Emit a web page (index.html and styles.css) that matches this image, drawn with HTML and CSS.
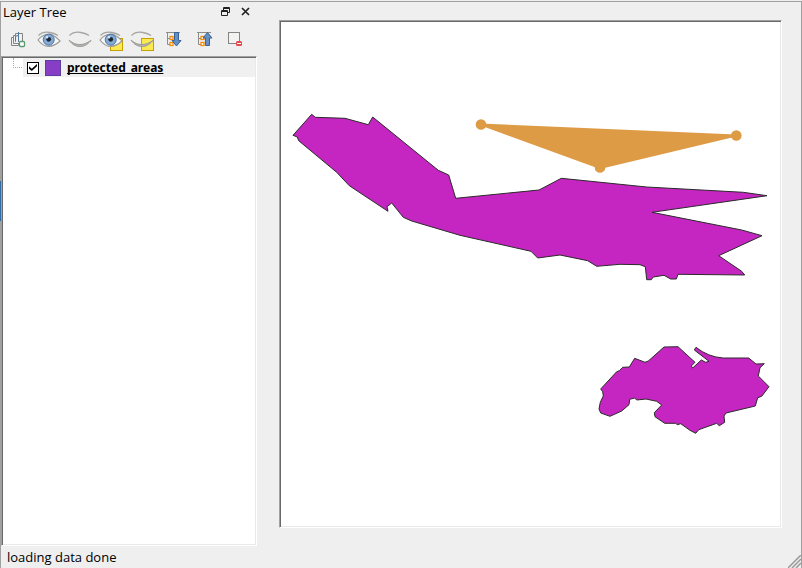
FILE: index.html
```html
<!DOCTYPE html>
<html lang="en">
<head>
<meta charset="utf-8">
<title>Layer Tree</title>
<link rel="stylesheet" href="styles.css">
</head>
<body>
<svg class="defs" aria-hidden="true">
  <defs>
    <g id="eye-open">
      <path d="M1.500 4.500C5 1 9 .8 13 1.500S19 3 21 4.500" fill="none" stroke="#a5a5a2" stroke-width="1.300"/>
      <path d="M1 9C5 4 9 3 13 3.300S20 7 23 10C19 14 16 15.300 11.500 15.300S4 13 1 9Z" fill="#f7f7f5" stroke="#999996" stroke-width="1.200"/>
      <circle cx="11.700" cy="8.700" r="5.500" fill="#83a9d6" stroke="#4d75a3"/>
      <circle cx="11.700" cy="8.300" r="2.400" fill="#1d2633"/>
      <circle cx="10" cy="6.300" r="1.200" fill="#dce9f6"/>
    </g>
    <g id="eye-closed">
      <path d="M1.500 4.500C5 1 9 .8 13 1.500S19 3 21 4.500" fill="none" stroke="#a5a5a2" stroke-width="1.300"/>
      <path d="M1 9C5 12.500 8 13.500 12 13.500S19 12 23 9.500C19 14 16 15.500 12 15.500S4 13.500 1 9Z" fill="#b5b5b2" stroke="#999996"/>
    </g>
    <rect id="selection" x="11.500" y="7.500" width="12" height="12" fill="#fce94f" stroke="#c4a000"/>
    <g id="tree">
      <path d="M5 1.500H19M6.500 1.500V13.500H9M6.500 7.500H9" fill="none" stroke="#8c8c88"/>
      <rect x="9" y="5.500" width="3" height="3" fill="#fff" stroke="#f58b0a" stroke-width="1.300"/>
      <rect x="9" y="11.500" width="3" height="3" fill="#fff" stroke="#f58b0a" stroke-width="1.300"/>
    </g>
  </defs>
</svg>
<div class="window">
  <main class="workspace">
    <section class="dock" aria-labelledby="dock-title">
      <header class="dock-header">
        <h1 class="dock-title" id="dock-title">Layer Tree</h1>
        <button class="dock-button" aria-label="Float">
          <svg width="9" height="9" viewBox="0 0 9 9"><path d="M2.500 3V.5H8.500V5.500H6.500M2.500 1.500H8.500M.5 3.500H6.500V8.500H.5ZM.5 4.500H6.500" fill="none" stroke="#222"/></svg>
        </button>
        <button class="dock-button" aria-label="Close">
          <svg width="9" height="9" viewBox="0 0 9 9"><path d="M1 1L8 8M8 1L1 8" stroke="#222" stroke-width="1.700"/></svg>
        </button>
      </header>
      <div class="toolbar" role="toolbar" aria-label="Layers">
        <button class="tool" aria-label="Add group">
          <svg width="24" height="20" viewBox="0 0 24 20"><path d="M8 6.500H5.500V14.500H12.500V12M10 4.500H7.500V12.500H14.500V10M9.500 10.500V2.500H16.500V10" fill="none" stroke="#858585"/><path d="M9.500 10.500V6Q9.500 4.500 12.500 4.500M12.500 1V11" fill="none" stroke="#547a9e"/><rect x="13.500" y="10.500" width="5" height="5" rx="1" fill="#fff" stroke="#5b9b70" stroke-width="1.300"/></svg>
        </button>
        <button class="tool" aria-label="Show all"><svg width="24" height="20" viewBox="0 0 24 20"><use href="#eye-open"/></svg></button>
        <button class="tool" aria-label="Hide all"><svg width="24" height="20" viewBox="0 0 24 20"><use href="#eye-closed"/></svg></button>
        <button class="tool" aria-label="Show selected"><svg width="24" height="20" viewBox="0 0 24 20"><use href="#selection"/><use href="#eye-open"/></svg></button>
        <button class="tool" aria-label="Hide selected"><svg width="24" height="20" viewBox="0 0 24 20"><use href="#selection"/><use href="#eye-closed"/></svg></button>
        <button class="tool" aria-label="Expand all"><svg width="24" height="20" viewBox="0 0 24 20"><use href="#tree"/><path d="M13.500 1.500H17.500V9.500H20L15.500 15 11 9.500H13.500Z" fill="#6490c3" stroke="#3a6496"/></svg></button>
        <button class="tool" aria-label="Collapse all"><svg width="24" height="20" viewBox="0 0 24 20"><use href="#tree"/><path d="M13.500 14.500H17.500V7H20L15.500 1.500 11 7H13.500Z" fill="#6490c3" stroke="#3a6496"/></svg></button>
        <button class="tool" aria-label="Remove layer"><svg width="24" height="20" viewBox="0 0 24 20"><rect x="5.500" y="1.500" width="11" height="11" fill="#f2f2f2" stroke="#85857f"/><rect x="13" y="10" width="6" height="5" rx="1.500" fill="#e8474c"/><path d="M14 12.500H18" stroke="#fff"/></svg></button>
      </div>
      <div class="tree sunken">
        <label class="layer">
          <span class="branch"></span>
          <input class="check" type="checkbox" checked>
          <span class="swatch"></span>
          <span class="layer-name">protected_areas</span>
        </label>
      </div>
    </section>
    <section class="map sunken" aria-label="Map">
      <svg class="canvas" viewBox="281 22 500 504">
        <g class="area">
          <path d="M293 135.300L311.700 114.300 315.300 117.300 345 118.300 368.300 124.700 372.700 117 438.300 170.300 448.700 175 455.700 198.300 539 190 561.300 178.300 646.700 187 743.300 192.300 767 195.700 652 212.300 741.700 230 762 235.700 718.700 255.700 741.700 271.300 744.700 275 678 274.300 676.300 279 670.700 279 664 275.300 653.300 277 651.300 279.700H646.700L645.300 266.700 640 264.700 620 264.300 596.700 266.300 587.700 260.700 560 255 537.700 258 531 251.300 460 235.300 411.700 221 403.300 217.300 391.700 203 387 206.700 388 211.300 349.300 185.700 336.700 172.300 298.700 140.700 297.300 137Z"/>
          <path d="M600.700 389L616.700 371.700 619.300 370.700 622.700 367.300 629.300 367 634.700 358.300 645 362.300 648.300 361 664 347 678 346.700 695 362.300 691.300 366 692.700 368 701.300 360 705.700 362.300 709 361.300 694.300 350 696 347.300Q708 357 723.300 358H748.700L756 364 764.300 363.700 760 367.700 758.300 376 769 386.700 761.700 396.300 757.700 397.700 755.300 406 726 413 724 416 724.700 422.300 719.300 425.700 716.700 423.300 698.700 429.700 695.700 433.300 690 430.300 680.700 423.700 677.300 424.700 675.700 423.300H664.700L655 416.700 654.300 412.700 661.700 405 656.700 401.300 646 399 636.700 400 634.700 398 629.700 399.300 629 404.700 621.700 411 610 416.300 600.700 413 599 409 600.300 402.300 603.300 396 602.700 391.700Z"/>
        </g>
        <g class="sketch">
          <path d="M481 124.500L736 135.500L600 168Z"/>
          <circle cx="481" cy="124.500" r="4.300"/>
          <circle cx="736.300" cy="135.500" r="4.300"/>
          <circle cx="600" cy="167.500" r="4.300"/>
        </g>
      </svg>
    </section>
  </main>
  <footer class="status">
    <span role="status">loading data done</span>
    <svg class="grip" width="13" height="13" viewBox="0 0 13 13"><path d="M0 13L13 0M4 13L13 4M8 13L13 8" stroke="#999" stroke-width="1.500"/></svg>
  </footer>
</div>
</body>
</html>
```
FILE: styles.css
```css
* { box-sizing: border-box; }

body {
  margin: 0;
  padding-top: 1px;
  height: 100vh;
  background: #efefef;
  color: #000;
  font: 13px/16px "Open Sans", "Noto Sans", sans-serif;
}

.defs { position: absolute; width: 0; height: 0; }

.window {
  position: relative;
  display: flex;
  flex-direction: column;
  height: 100%;
  border: 1px solid #a0a0a0;
  border-bottom: 0;
}

/* Splitter highlight lying over the window's left edge */
.window::before {
  content: "";
  position: absolute;
  top: 179px;
  left: -1px;
  width: 1px;
  height: 40px;
  background: #2f6ca8;
}

.workspace {
  display: flex;
  flex: 1;
  min-height: 0;
  gap: 22px;
}

.dock {
  display: flex;
  flex-direction: column;
  width: 32%;
}

.dock-header {
  display: flex;
  align-items: center;
  gap: 5px;
  height: 22px;
  padding: 0 4px 4px 2px;
}

.dock-title { flex: 1; margin: 0; padding-top: 2px; font-size: 13px; font-weight: 400; }

button { border: 0; padding: 0; background: none; }

.dock-button {
  display: flex;
  align-items: center;
  justify-content: center;
  width: 15px;
  height: 16px;
}

.toolbar {
  display: flex;
  align-items: center;
  gap: 7px;
  height: 32px;
  padding: 2px 5px 0;
}

.tool { display: flex; width: 24px; height: 20px; }

.sunken {
  background: #fff;
  border: 1px solid;
  border-color: #a0a0a0 #fff #fff #a0a0a0;
  box-shadow: inset 1px 1px #696969, inset -1px -1px #e9e9e9;
}

.tree { flex: 1; padding: 1px; }

.layer {
  display: flex;
  align-items: center;
  height: 19px;
  background: linear-gradient(90deg, #fff 20px, #f0f0f0 20px);
}

.branch {
  align-self: flex-start;
  width: 9px;
  height: 10px;
  margin-left: 10px;
  border: dotted #aaa;
  border-width: 0 0 1px 1px;
}

.check {
  appearance: none;
  display: grid;
  place-items: center;
  width: 12px;
  height: 12px;
  margin: 0 6px 0 5px;
  border: 1px solid #000;
  background: #fff;
}

.check:checked::before {
  content: "";
  width: 8px;
  height: 8px;
  background: #000;
  clip-path: polygon(0 35%, 35% 65%, 100% 5%, 100% 35%, 35% 95%, 0 65%);
}

.swatch {
  width: 16px;
  height: 16px;
  margin-right: 6px;
  border: 1px solid #5b3fa0;
  background: #873dc5;
}

.layer-name {
  font: 700 12px/16px "Noto Sans", sans-serif;
  text-decoration: underline;
  text-decoration-skip-ink: none;
}

.map { flex: 1; min-width: 0; margin: 18px 19px 18px 0; padding: 1px 0 1px 1px; }

.canvas { display: block; width: 100%; height: 100%; }

.area { fill: #c525c0; stroke: #2b2b2b; stroke-width: 1; }

.sketch { fill: #de9b45; stroke: #de9b45; stroke-width: 2; }

.status {
  display: flex;
  align-items: center;
  justify-content: space-between;
  height: 22px;
  padding-left: 6px;
}

.grip { align-self: flex-end; }
```
